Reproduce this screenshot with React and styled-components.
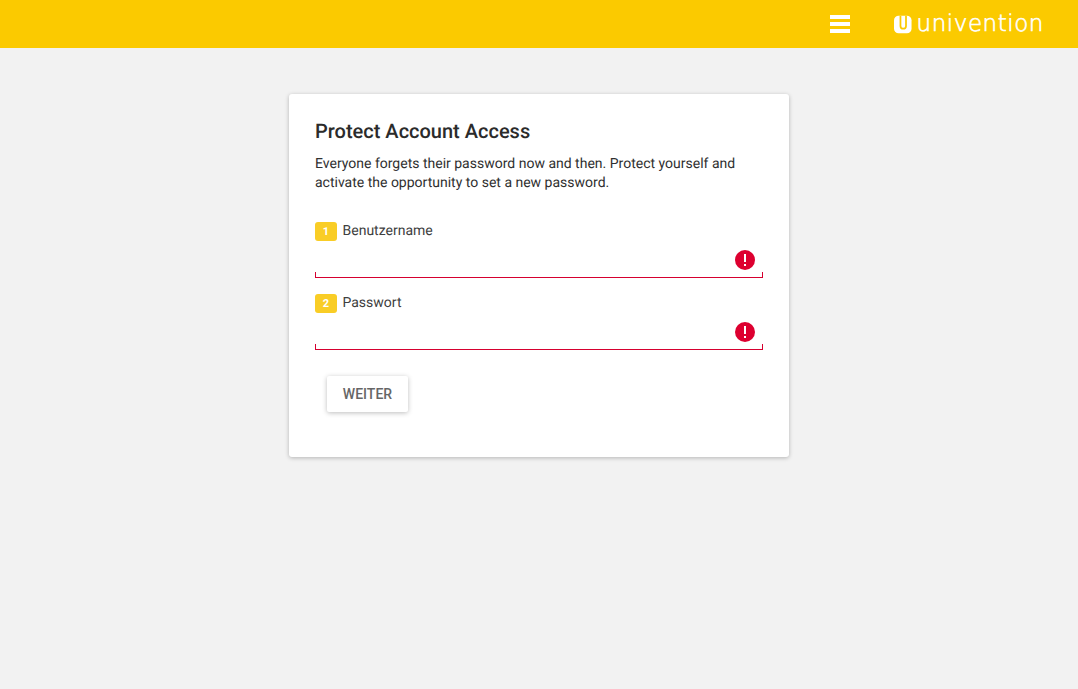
import React from 'react';
import styled, { createGlobalStyle } from 'styled-components';

const GlobalStyle = createGlobalStyle`
  html, body {
    margin: 0;
    padding: 0;
    height: 100%;
    background: #f2f2f2;
    font-family: Roboto, "Liberation Sans", sans-serif;
    text-rendering: geometricPrecision;
  }
`;

const Header = styled.header`
  display: flex;
  justify-content: flex-end;
  align-items: center;
  height: 48px;
  padding-right: 34px;
  background: #fbca00;
`;

const MenuIcon = styled.div`
  display: flex;
  flex-direction: column;
  gap: 3px;
  width: 20px;
  margin-right: 44px;
`;

const MenuBar = styled.span`
  display: block;
  height: 4px;
  background: #fff;
`;

const Logo = styled.div`
  display: flex;
  align-items: center;
  gap: 5px;
  width: 150px;
  color: #fff;
`;

const LogoWord = styled.span`
  font-family: "DejaVu Sans", sans-serif;
  font-size: 23px;
  font-weight: 200;
  letter-spacing: 0.55px;
  line-height: 24px;
  white-space: nowrap;
  -webkit-text-stroke: 0.6px #fff;
`;

const Main = styled.main`
  display: flex;
  justify-content: center;
  padding-top: 46px;
`;

const Card = styled.section`
  box-sizing: border-box;
  width: 500px;
  height: 363px;
  padding: 26px 26px 0;
  background: #fff;
  border-radius: 3px;
  box-shadow: 0 1px 4px rgba(0, 0, 0, 0.26);
`;

const Title = styled.h1`
  margin: 0 0 12px;
  font-size: 20px;
  font-weight: 500;
  line-height: 23px;
  color: #2b2b2b;
`;

const Description = styled.p`
  margin: 0 0 22px;
  font-size: 14px;
  line-height: 19px;
  color: #303030;
`;

const Field = styled.div`
  display: flex;
  flex-direction: column;
  height: 72px;
`;

const LabelRow = styled.div`
  display: flex;
  align-items: center;
  gap: 5.5px;
  height: 24px;
  padding-top: 5px;
  box-sizing: border-box;
`;

const Badge = styled.span`
  display: flex;
  align-items: center;
  justify-content: center;
  width: 22px;
  height: 19px;
  margin-top: 3px;
  border-radius: 3px;
  background: #f9cd26;
  color: #fff;
  font-size: 11px;
  font-weight: 700;
`;

const Label = styled.label`
  font-size: 14px;
  line-height: 16px;
  margin-top: 2px;
  color: #404040;
`;

const InputWrap = styled.div`
  position: relative;
  height: 32px;
  margin-top: 7px;
`;

const Input = styled.input`
  display: block;
  box-sizing: border-box;
  width: 100%;
  height: 100%;
  padding: 0;
  border: 0;
  outline: 0;
  background: transparent;
`;

const Underline = styled.div`
  position: absolute;
  left: 0;
  right: 0;
  bottom: 0;
  height: 6px;
  border: 1px solid #d6002f;
  border-top: 0;
  box-sizing: border-box;
`;

const ErrorIcon = styled.svg`
  position: absolute;
  right: 8px;
  top: 4px;
  width: 20px;
  height: 20px;
`;

const Button = styled.button`
  display: block;
  width: 81px;
  height: 36px;
  margin: 17px 0 0 12px;
  padding: 0;
  border: 0;
  border-radius: 2px;
  background: #fff;
  color: #666;
  font-family: inherit;
  font-size: 14px;
  font-weight: 500;
  box-shadow: 0 1px 5px rgba(0, 0, 0, 0.26);
`;

const LogoMark = () => (
  <svg width="19" height="19" viewBox="0 0 19 19">
    <rect width="19" height="19" rx="5" fill="#fff" />
    <path
      d="M7 0v11a3 3 0 0 0 3 3a3 3 0 0 0 3-3V0"
      fill="none"
      stroke="#fbca00"
      strokeWidth="1.9"
    />
  </svg>
);

const Alert = () => (
  <ErrorIcon viewBox="0 0 20 20">
    <circle cx="10" cy="10" r="10" fill="#dd0030" />
    <rect x="9" y="4" width="2" height="8" fill="#fff" />
    <rect x="9" y="14" width="2" height="2" fill="#fff" />
  </ErrorIcon>
);

const fields = [
  { step: 1, name: 'Benutzername', type: 'text' },
  { step: 2, name: 'Passwort', type: 'password' },
];

const App = () => (
  <>
    <GlobalStyle />
    <Header>
      <MenuIcon>
        <MenuBar />
        <MenuBar />
        <MenuBar />
      </MenuIcon>
      <Logo>
        <LogoMark />
        <LogoWord>univention</LogoWord>
      </Logo>
    </Header>
    <Main>
      <Card>
        <Title>Protect Account Access</Title>
        <Description>
          Everyone forgets their password now and then. Protect yourself and
          activate the opportunity to set a new password.
        </Description>
        {fields.map(item => (
          <Field key={item.step}>
            <LabelRow>
              <Badge>{item.step}</Badge>
              <Label>{item.name}</Label>
            </LabelRow>
            <InputWrap>
              <Input type={item.type} aria-label={item.name} />
              <Underline />
              <Alert />
            </InputWrap>
          </Field>
        ))}
        <Button>WEITER</Button>
      </Card>
    </Main>
  </>
);

export default App;
